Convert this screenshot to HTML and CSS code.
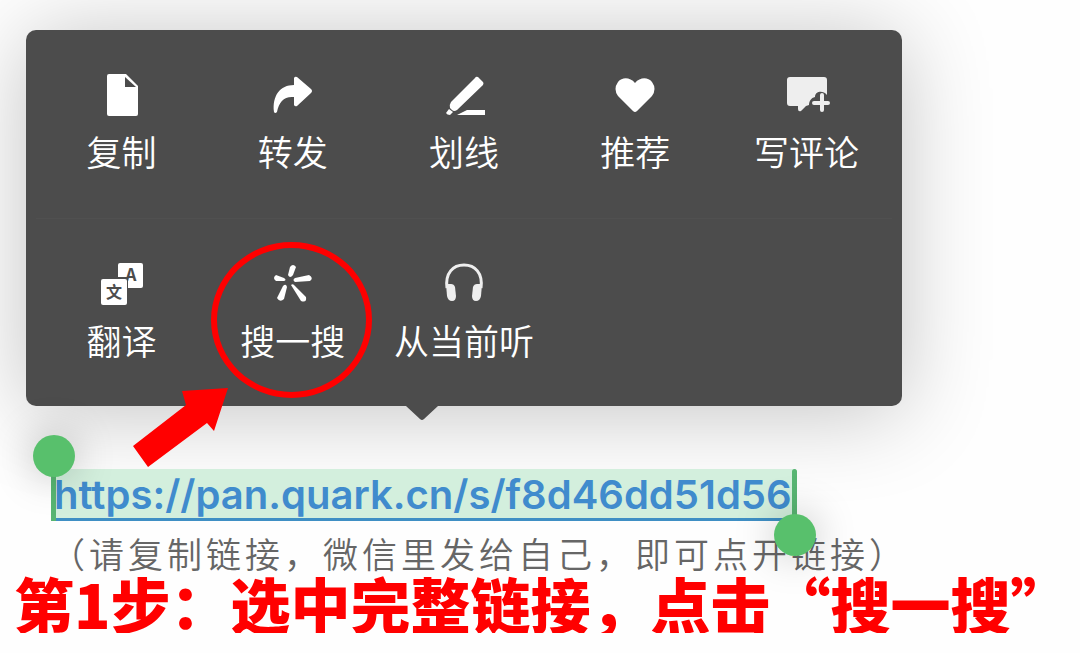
FILE: index.html
```
<!DOCTYPE html>
<html lang="zh-CN">
<head>
    <meta charset="UTF-8">
    <meta name="viewport" content="width=device-width, initial-scale=1">
    <title>搜一搜</title>
    <link rel="stylesheet" href="styles.css">
</head>
<body>
    <main class="page">
        <div class="popup">
            <div class="popup-row">
                <button type="button" class="action">
                    <svg class="icon" viewBox="0 0 44 44"><path d="M9 1H26L38 13V41Q38 43 36 43H9Q7 43 7 41V3Q7 1 9 1Z"/><path d="M25 4V14H36Z" fill="#4c4c4c"/></svg>
                    <span>复制</span>
                </button>
                <button type="button" class="action">
                    <svg class="icon" viewBox="0 0 44 44"><path d="M23 12V5Q24 3 26 4L40 16Q42 18 40 20L26 33Q24 34 23 32V24C13 23 8 29 6 39Q4 41 3 39C1 23 9 12 23 12Z"/></svg>
                    <span>转发</span>
                </button>
                <button type="button" class="action">
                    <svg class="icon" viewBox="0 0 44 44"><path d="M33 5Q34 3 36 4L41 9Q42 10 41 12L15 37Q12 39 10 37L8 35Q7 32 9 29Z"/><path d="M7 36L11 39L8 42Q5 42 4 40Z"/><path d="M15 42L25 37H43V42Z"/></svg>
                    <span>划线</span>
                </button>
                <button type="button" class="action">
                    <svg class="icon" viewBox="0 0 44 44"><path d="M22 10C27 4 35 4 39 9Q44 16 39 23L24 38Q22 40 20 38L5 23Q0 16 5 9C9 4 17 4 22 10Z"/></svg>
                    <span>推荐</span>
                </button>
                <button type="button" class="action">
                    <svg class="icon" viewBox="0 0 44 44"><g fill="#eeeeee"><path d="M6 4H40Q43 4 43 7V22C39 17 31 18 31 24C27 25 25 28 25 32L22 33L17 38Q14 39 14 36V33H6Q3 33 3 30V7Q3 4 6 4Z"/><path d="M38 22V37M30 30H44" fill="none" stroke="#eeeeee" stroke-width="4" stroke-linecap="round"/></g></svg>
                    <span>写评论</span>
                </button>
            </div>
            <div class="popup-row">
                <button type="button" class="action">
                    <svg class="icon" viewBox="0 0 44 44"><rect x="18" y="1" width="25" height="25" rx="2"/><text class="icon-letter" x="31" y="19" font-size="17">A</text><rect x="-1" y="15" width="29" height="29" fill="#4c4c4c"/><rect x="1" y="17" width="26" height="26" rx="2"/><text class="icon-letter" x="14" y="36" font-size="16">文</text></svg>
                    <span>翻译</span>
                </button>
                <button type="button" class="action">
                    <svg class="icon" viewBox="0 0 44 44"><path d="M17 13L19 5Q22 1 25 5L22 13Q19 17 17 13Z"/><path d="M13 19L5 19Q1 16 5 13L13 16Q16 18 13 19Z"/><path d="M24 16L38 13Q43 16 39 19L24 20Q21 18 24 16Z"/><path d="M12 24Q15 21 16 25L13 37Q9 41 6 36Z"/><path d="M20 23Q22 21 24 24L35 35Q36 41 30 39Z"/></svg>
                    <span>搜一搜</span>
                </button>
                <button type="button" class="action">
                    <svg class="icon" viewBox="0 0 44 44"><g fill="#eeeeee"><path d="M5 26C3 11 11 3 22 3S41 11 39 26" fill="none" stroke="#eeeeee" stroke-width="3"/><path d="M4 22H9Q12 22 13 25L14 34Q14 39 10 39Q6 39 5 34Z"/><path d="M40 22H35Q32 22 31 25L30 34Q30 39 34 39Q38 39 39 34Z"/></g></svg>
                    <span>从当前听</span>
                </button>
            </div>
            <svg class="popup-tail" viewBox="0 0 32 15"><path d="M0 0H32L18 13Q16 15 14 13Z"/></svg>
            <div class="marker-circle"></div>
            <svg class="marker-arrow" viewBox="0 0 97 79"><path d="M0 58L53 17L49 3L95 0L81 43L74 35L15 79Z"/></svg>
        </div>

        <div class="selection">
            <a class="link" href="https://pan.quark.cn/s/f8d46dd51d56">https://pan.quark.cn/s/f8d46dd51d56</a>
            <span class="handle handle-start"></span>
            <span class="handle handle-end"></span>
        </div>
        <p class="hint">（请复制链接，微信里发给自己，即可点开链接）</p>
        <p class="step">第1步：选中完整链接，点击“搜一搜”</p>
    </main>
</body>
</html>
```
FILE: styles.css
```
* { box-sizing: border-box; }
body { margin: 0; background: #fefefe; font-family: "Noto Sans CJK SC", sans-serif; overflow-x: hidden; }
.page { padding: 30px 26px 0; }

/* popup menu */
.popup { position: relative; max-width: 876px; padding: 0 10px; background: #4c4c4c; border-radius: 10px; box-shadow: 0 6px 90px rgba(0, 0, 0, 0.24); }
.popup-row { display: grid; grid-template-columns: repeat(5, 1fr); height: 188px; }
.popup-row + .popup-row { border-top: 1px solid #505050; }
.action { display: flex; flex-direction: column; align-items: center; justify-content: center; gap: 14px; padding: 0 0 4px; border: none; background: none; color: #fff; font-family: inherit; font-size: 35px; font-weight: 350; line-height: 40px; white-space: nowrap; cursor: pointer; }
.icon { width: 44px; height: 44px; fill: #fff; overflow: visible; }
.icon-letter { fill: #4c4c4c; font-family: "Noto Sans CJK SC", sans-serif; font-weight: bold; text-anchor: middle; }
.popup-tail { position: absolute; left: 380px; top: 100%; width: 32px; height: 15px; fill: #4c4c4c; }

/* red markers over the menu */
.marker-circle { position: absolute; left: 185px; top: 212px; width: 161px; height: 156px; border: 6px solid #f00; border-radius: 50%; }
.marker-arrow { position: absolute; left: 107px; top: 358px; width: 97px; height: 79px; fill: #f00; }

/* selected link */
.selection { position: relative; width: fit-content; margin: 63px 0 0 26px; }
.link { display: block; padding: 2px 4px 0 2px; background: #d3efdd; border-bottom: 3px solid #3f8fc4; color: #408bcd; font-family: Inter, sans-serif; font-size: 40px; font-weight: 600; line-height: 47px; text-decoration: none; white-space: nowrap; }
.handle { position: absolute; width: 5px; background: #58b572; }
.handle::after { content: ""; position: absolute; left: -18px; width: 42px; height: 42px; border-radius: 50%; background: #58c06c; box-shadow: 0 0 40px rgba(0, 0, 0, 0.25); }
.handle-start { left: -1px; top: 0; bottom: 0; }
.handle-start::after { top: -34px; }
.handle-end { right: -1px; top: 0; height: 50px; border-radius: 3px; }
.handle-end::after { top: 45px; }

.hint { margin: 12px 0 0 24px; color: #666; font-size: 35px; font-weight: 350; line-height: 40px; letter-spacing: 4px; white-space: nowrap; }
.step { margin: 0 -12px; color: #f00; font-size: 60px; font-weight: 900; line-height: 60px; white-space: nowrap; }
```
